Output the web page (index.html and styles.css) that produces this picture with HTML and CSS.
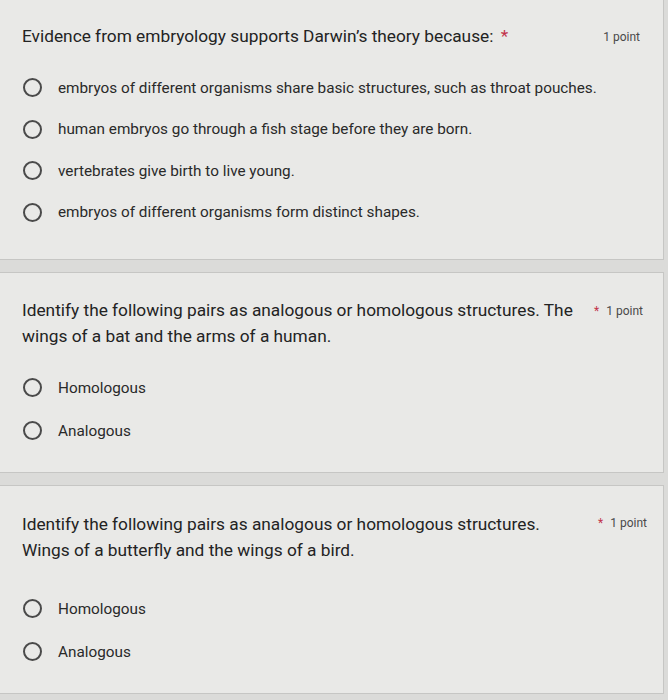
FILE: index.html
```html
<!DOCTYPE html>
<html lang="en">
<head>
<meta charset="utf-8">
<title>Quiz</title>
<link rel="stylesheet" href="styles.css">
</head>
<body>
<main class="page">
  <section class="card card-1">
    <div class="head">
      <h2 class="title">Evidence from embryology supports Darwin’s theory because: <span class="req">*</span></h2>
      <div class="points">1 point</div>
    </div>
    <ul class="options">
      <li class="option"><span class="radio"></span><span class="label">embryos of different organisms share basic structures, such as throat pouches.</span></li>
      <li class="option"><span class="radio"></span><span class="label">human embryos go through a fish stage before they are born.</span></li>
      <li class="option"><span class="radio"></span><span class="label">vertebrates give birth to live young.</span></li>
      <li class="option"><span class="radio"></span><span class="label">embryos of different organisms form distinct shapes.</span></li>
    </ul>
  </section>
  <section class="card card-2">
    <div class="head">
      <h2 class="title">Identify the following pairs as analogous or homologous structures. The wings of a bat and the arms of a human.</h2>
      <div class="points"><span class="req">*</span>1 point</div>
    </div>
    <ul class="options">
      <li class="option"><span class="radio"></span><span class="label">Homologous</span></li>
      <li class="option"><span class="radio"></span><span class="label">Analogous</span></li>
    </ul>
  </section>
  <section class="card card-3">
    <div class="head">
      <h2 class="title">Identify the following pairs as analogous or homologous structures. Wings of a butterfly and the wings of a bird.</h2>
      <div class="points"><span class="req">*</span>1 point</div>
    </div>
    <ul class="options">
      <li class="option"><span class="radio"></span><span class="label">Homologous</span></li>
      <li class="option"><span class="radio"></span><span class="label">Analogous</span></li>
    </ul>
  </section>
</main>
</body>
</html>
```
FILE: styles.css
```css
html, body {
  margin: 0;
  padding: 0;
  background: #dbdbd9;
  font-family: Roboto, "Noto Sans", Arial, sans-serif;
  color: #2b2b2b;
}
.page {
  width: 664px;
  display: flex;
  flex-direction: column;
  gap: 12px;
}
.card {
  background: #e9e9e7;
  border: 1px solid #c6c6c4;
  border-left: none;
  padding: 0 20px 0 22px;
}
.card-1 { border-top: none; padding-top: 23px; padding-bottom: 26px; padding-right: 23px; }
.card-2 { padding-top: 24px; padding-bottom: 20px; padding-right: 20px; }
.card-3 { padding-top: 25px; padding-bottom: 20px; padding-right: 16px; }
.head {
  display: flex;
  align-items: flex-start;
  justify-content: space-between;
}
.title {
  margin: 0;
  font-size: 17.3px;
  font-weight: 400;
  line-height: 26px;
  width: 558px;
  color: #232323;
}
.card-1 .title { width: auto; }
.points {
  font-size: 12px;
  color: #4a4a4a;
  line-height: 26px;
  white-space: nowrap;
  padding-top: 1px;
}
.card-3 .points { margin-top: -2px; }
.req {
  color: #c2334a;
}
.title .req {
  margin-left: 3px;
}
.points .req {
  margin-right: 7px;
}
.options {
  list-style: none;
  margin: 17px 0 0;
  padding: 0;
}
.card-2 .options { margin-top: 17px; }
.card-3 .options { margin-top: 24px; }
.option {
  display: flex;
  align-items: center;
  gap: 16px;
  height: 41.5px;
  padding-left: 1px;
}
.card-2 .option, .card-3 .option { height: 43px; }
.radio {
  box-sizing: border-box;
  width: 19px;
  height: 19px;
  border: 2px solid #4a4a4a;
  border-radius: 50%;
  flex: none;
}
.label {
  font-size: 15.3px;
  color: #2a2a2a;
}
```
